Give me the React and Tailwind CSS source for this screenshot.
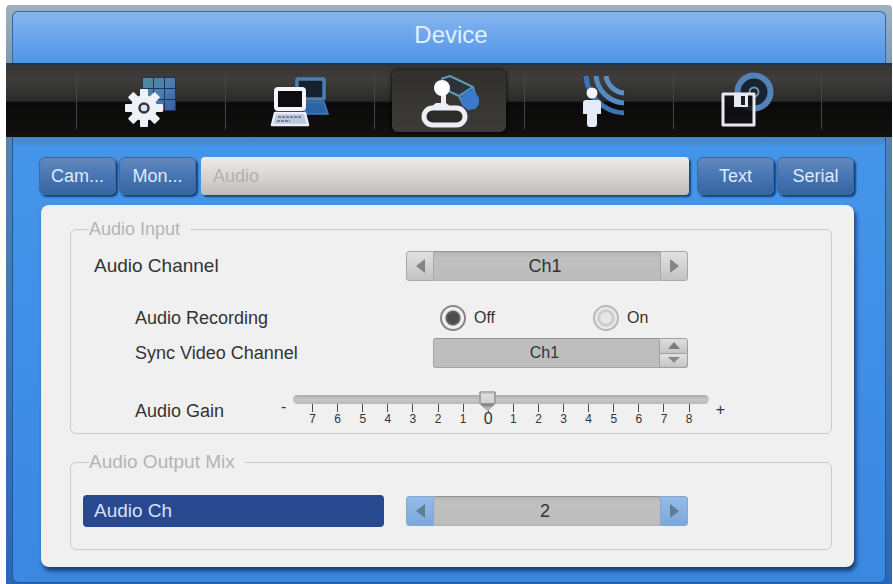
import { useState } from 'react';

function GearIcon() {
  const cells = [0, 1, 2];
  return (
    <svg width="60" height="60" viewBox="0 0 60 60" aria-hidden="true">
      <defs>
        <linearGradient id="grid" x1="21" y1="6" x2="55" y2="40" gradientUnits="userSpaceOnUse">
          <stop offset="0" stopColor="#4f8c98" />
          <stop offset="0.5" stopColor="#4b7fb0" />
          <stop offset="1" stopColor="#3558a8" />
        </linearGradient>
      </defs>
      <rect x="21" y="6" width="34" height="34" fill="#1d3558" />
      {cells.map((r) =>
        cells.map((c) => (
          <rect key={`${r}${c}`} x={22 + c * 11} y={7 + r * 11} width="10" height="10" fill="url(#grid)" />
        ))
      )}
      <g fill="#eef1f8">
        {[0, 45, 90, 135].map((a) => (
          <rect key={a} x="19" y="18" width="8" height="38" rx="1" transform={`rotate(${a} 23 37)`} />
        ))}
        <circle cx="23" cy="37" r="13" />
      </g>
      <circle cx="23" cy="37" r="4.5" fill="#dfe5ee" stroke="#33383f" strokeWidth="2.5" />
    </svg>
  );
}

function ComputersIcon() {
  return (
    <svg width="60" height="60" viewBox="0 0 60 60" aria-hidden="true">
      <rect x="27" y="8" width="27" height="20" rx="1" fill="#15212e" stroke="#4d7fae" strokeWidth="3.5" />
      <path d="M32 31h22l4 12H36z" fill="#2c64a8" stroke="#3f7cc0" strokeWidth="1.5" />
      <rect x="6" y="18" width="28" height="20" rx="2" fill="#0d0d0f" stroke="#f3f5fb" strokeWidth="4" />
      <path d="M5 42h30l3 12H2z" fill="#bcc8de" stroke="#e9eefa" strokeWidth="2.5" strokeLinejoin="round" />
      <path d="M8 46h24M7 50h13" stroke="#5f6c82" strokeWidth="1.5" strokeDasharray="3 1" />
    </svg>
  );
}

function JoystickIcon() {
  return (
    <svg width="60" height="60" viewBox="0 0 60 60" aria-hidden="true">
      <path d="M22 8l9-3 23 11-14 9-15-7" fill="#2c3438" stroke="#5a9ab8" strokeWidth="2" strokeLinejoin="round" />
      <path d="M40 25l14-9 3 10-12 9z" fill="#34648f" stroke="#5590c4" strokeWidth="2" strokeLinejoin="round" />
      <path d="M45 24l9-4 7 10-5 7-7 1-6-6z" fill="#3a79cb" stroke="#3a79cb" strokeWidth="2" strokeLinejoin="round" />
      <path d="M22 20h5v17h-5z" fill="#eceef4" />
      <circle cx="23" cy="17" r="8" fill="#fff" />
      <rect x="5" y="37" width="41" height="17" rx="8.5" fill="#2b2b29" stroke="#eceef6" strokeWidth="5" />
      <path d="M12 36l5-4h10l5 4" fill="#eceef6" />
    </svg>
  );
}

function SensorIcon() {
  return (
    <svg width="60" height="60" viewBox="0 0 60 60" aria-hidden="true">
      <g fill="none" strokeWidth="5">
        <path d="M37 5A20 20 0 0 0 55 22" stroke="#5b8fc4" />
        <path d="M27 5A30 30 0 0 0 55 32" stroke="#548ac0" />
        <path d="M17 5A40 40 0 0 0 55 42" stroke="#3f72b4" />
      </g>
      <circle cx="23" cy="22" r="5.5" fill="#f2f4fb" />
      <path
        d="M17 29h12a3 3 0 0 1 3 3v11h-4v10a3 3 0 0 1-3 3h-4a3 3 0 0 1-3-3V43h-4V32a3 3 0 0 1 3-3z"
        fill="#e4eaf8"
      />
    </svg>
  );
}

function StorageIcon() {
  return (
    <svg width="60" height="60" viewBox="0 0 60 60" aria-hidden="true">
      <circle cx="37" cy="21" r="16.5" fill="#182231" stroke="#5481b8" strokeWidth="6" />
      <circle cx="37" cy="21" r="4.5" fill="none" stroke="#7396a4" strokeWidth="2" />
      <path d="M6 23h31v31H6z" fill="#111114" fillOpacity="0.85" stroke="#e8eaf2" strokeWidth="3" strokeLinejoin="round" />
      <path d="M17 23h14v13H17z" fill="#e8eaf2" />
      <rect x="24" y="25" width="4" height="9" fill="#1b2027" />
    </svg>
  );
}

const sections = [
  { name: 'System', Icon: GearIcon },
  { name: 'Network', Icon: ComputersIcon },
  { name: 'Device', Icon: JoystickIcon },
  { name: 'Event', Icon: SensorIcon },
  { name: 'Storage', Icon: StorageIcon },
];

function Tab({ children }) {
  return (
    <button
      type="button"
      className="h-[38px] w-[77px] shrink-0 rounded-md border border-[#3a6aa6] bg-linear-to-b from-[#6388b9] via-[#4a77b5] via-45% to-[#35659f] text-lg leading-none text-[#dfeafa] shadow-[2px_2px_2px_#173f73]"
    >
      {children}
    </button>
  );
}

function Stepper({ label, value, onChange, active }) {
  const button = active
    ? 'border-[#8aa6cc] bg-linear-to-b from-[#96bbe8] to-[#7ba8dc]'
    : 'border-[#a8a8a8] bg-linear-to-b from-[#e2e2e2] to-[#c2c2c2]';
  const arrow = active ? '#5d7f90' : '#858585';
  return (
    <div role="group" aria-label={label} className="flex h-[30px] min-w-0">
      <button
        type="button"
        aria-label={`${label} previous`}
        onClick={() => onChange(-1)}
        className={`flex w-7 items-center justify-center rounded-l-[3px] border ${button}`}
      >
        <svg width="9" height="14" viewBox="0 0 9 14"><path d="M9 0v14L0 7z" fill={arrow} /></svg>
      </button>
      <output className="flex flex-1 items-center justify-center border-y border-t-[#929292] border-b-[#b4b4b4] bg-linear-to-b from-[#b4b4b4] via-[#c0c0c0] via-20% to-[#bcbcbc] pr-1 text-lg leading-none text-[#333]">
        {value}
      </output>
      <button
        type="button"
        aria-label={`${label} next`}
        onClick={() => onChange(1)}
        className={`flex w-7 items-center justify-center rounded-r-[3px] border ${button}`}
      >
        <svg width="9" height="14" viewBox="0 0 9 14"><path d="M0 0v14l9-7z" fill={arrow} /></svg>
      </button>
    </div>
  );
}

function Radio({ label, checked, onChange }) {
  return (
    <label className="flex w-[153px] shrink-0 items-center gap-2 text-base leading-none text-[#333]">
      <input
        type="radio"
        name="recording"
        checked={checked}
        onChange={onChange}
        className="size-[26px] appearance-none rounded-full border-2 border-[#b8b8b8] bg-[radial-gradient(circle,#e6e6e6_0_5px,#c6c6c6_7px,#d2d2d2_8px,#ececec_10px)] checked:border-[#858585] checked:bg-[radial-gradient(circle,#4c4c4c_0_5px,#6a6a6a_7px,#e8e8e8_8px,#f2f2f2_10px)]"
      />
      {label}
    </label>
  );
}

const marks = [-7, -6, -5, -4, -3, -2, -1, 0, 1, 2, 3, 4, 5, 6, 7, 8];
const row = 'grid grid-cols-[minmax(0,301fr)_minmax(0,282fr)] gap-[22px] pr-[143px] items-center';
const fieldset = 'min-w-0 rounded-md border border-[#cccccc] pl-3';
const legend = 'ml-[6px] h-6 pr-[10px] leading-6 text-[#b4b4b4]';

export default function App() {
  const [channel, setChannel] = useState(1);
  const [sync, setSync] = useState(1);
  const [mix, setMix] = useState(2);
  const [recording, setRecording] = useState(false);
  const [gain, setGain] = useState(0);
  const step = (set) => (d) => set((v) => Math.min(16, Math.max(1, v + d)));

  return (
    <div className="min-h-screen bg-white pt-[5px] pr-px pl-[6px] font-['Liberation_Sans',Arial,sans-serif]">
      <div className="rounded-t-sm bg-linear-to-b from-[#9fb1bd] via-[#5583ae] via-20% to-[#2a67b5] pt-[6px] pb-[2px]">
        <header className="mx-[6px] flex h-[52px] items-center justify-center rounded-t-md border border-b-0 border-[#34689f] bg-linear-to-b from-[#86b5ee] to-[#4e94e8] pb-[6px]">
          <h1 className="pl-1 text-2xl leading-none text-[#e3f0fd]">Device</h1>
        </header>

        <nav
          aria-label="Sections"
          className="border-t-2 border-[#1d3450] bg-[linear-gradient(#373634_0%,#3e3d3b_20%,#2a2a2a_50%,#0a0a0a_52%,#131110_100%)] px-[70px]"
        >
          <ul className="grid h-[72px] grid-cols-5 items-center">
            {sections.map(({ name, Icon }) => (
              <li
                key={name}
                className="flex h-14 items-center justify-center border-l border-[#454545] last:border-r"
              >
                <button
                  type="button"
                  aria-label={name}
                  aria-current={name === 'Device' ? 'page' : undefined}
                  className="flex h-[62px] w-[114px] items-center justify-center rounded-md aria-[current]:bg-linear-to-b aria-[current]:from-[#31302d] aria-[current]:to-[#3c3b37] aria-[current]:shadow-[0_0_4px_#000]"
                >
                  <Icon />
                </button>
              </li>
            ))}
          </ul>
        </nav>

        <main className="mx-[6px] rounded-b-md border border-t-0 border-[#1f5aa0] bg-[linear-gradient(#4a83bd_0px,#4494ea_10px,#4494ea_40px,#3a88e0_100%)] pt-5 pr-[31px] pb-[15px] pl-[26px]">
          <div className="flex gap-[3px]">
            <Tab>Cam...</Tab>
            <Tab>Mon...</Tab>
            <button
              type="button"
              aria-pressed="true"
              className="mr-[5px] ml-[2px] h-[38px] min-w-0 flex-1 rounded-[4px] bg-linear-to-b from-[#efebe9] via-[#d9d5d3] to-[#bdbbb8] pl-3 text-left text-lg leading-none text-[#b3b1b0] shadow-[2px_2px_2px_#1d4272]"
            >
              Audio
            </button>
            <Tab>Text</Tab>
            <Tab>Serial</Tab>
          </div>

          <div className="mt-[10px] ml-[2px] rounded-lg bg-[#f0f0f0] pt-3 pr-[22px] pb-[17px] pl-[29px] text-[#333] shadow-[2px_4px_4px_#173e70]">
            <fieldset className={fieldset}>
              <legend className={`${legend} text-lg`}>Audio Input</legend>
              <div className={`${row} pt-[10px]`}>
                <span className="pl-[11px] text-[19px] leading-[30px]">Audio Channel</span>
                <Stepper label="Audio Channel" value={`Ch${channel}`} onChange={step(setChannel)} />
              </div>

              <div className={`${row} mt-6`} role="radiogroup" aria-labelledby="recording">
                <span id="recording" className="pl-[52px] text-lg leading-[26px]">Audio Recording</span>
                <div className="flex pl-[34px]">
                  <Radio label="Off" checked={!recording} onChange={() => setRecording(false)} />
                  <Radio label="On" checked={recording} onChange={() => setRecording(true)} />
                </div>
              </div>

              <div className={`${row} mt-[7px]`}>
                <span className="pl-[52px] text-lg leading-[30px]">Sync Video Channel</span>
                <div role="group" aria-label="Sync Video Channel" className="ml-[27px] flex h-[30px]">
                  <output className="flex flex-1 items-center justify-center rounded-l-[3px] border border-t-[#929292] border-r-0 border-b-[#a4a4a4] border-l-[#a4a4a4] bg-[#bebebe] pr-1 text-base leading-none">
                    Ch{sync}
                  </output>
                  <div className="flex w-[29px] flex-col">
                    <button
                      type="button"
                      aria-label="Next channel"
                      onClick={() => step(setSync)(1)}
                      className="flex flex-1 items-center justify-center rounded-tr-[3px] border border-[#a0a0a0] bg-linear-to-b from-[#dedede] to-[#c4c4c4]"
                    >
                      <svg width="12" height="7" viewBox="0 0 12 7"><path d="M0 7l6-7 6 7z" fill="#7c7c7c" /></svg>
                    </button>
                    <button
                      type="button"
                      aria-label="Previous channel"
                      onClick={() => step(setSync)(-1)}
                      className="flex flex-1 items-center justify-center rounded-br-[3px] border border-t-0 border-[#a0a0a0] bg-linear-to-b from-[#e2e2e2] to-[#c4c4c4]"
                    >
                      <svg width="12" height="6" viewBox="0 0 12 6"><path d="M0 0l6 6 6-6z" fill="#8a8a8a" /></svg>
                    </button>
                  </div>
                </div>
              </div>

              <div className="mt-5 mb-[7px] flex items-end pr-[106px]">
                <label htmlFor="gain" className="w-[198px] pl-[52px] text-lg leading-[30px]">Audio Gain</label>
                <span className="w-3 text-base leading-[38px]">-</span>
                <div className="min-w-0 flex-1">
                  <input
                    id="gain"
                    type="range"
                    min="-7"
                    max="8"
                    value={gain}
                    onChange={(e) => setGain(Number(e.target.value))}
                    className="relative z-10 block h-[22px] w-full appearance-none bg-transparent [&::-webkit-slider-runnable-track]:h-[9px] [&::-webkit-slider-runnable-track]:rounded-full [&::-webkit-slider-runnable-track]:bg-linear-to-b [&::-webkit-slider-runnable-track]:from-[#acacac] [&::-webkit-slider-runnable-track]:via-[#c6c6c6] [&::-webkit-slider-runnable-track]:to-[#bababa] [&::-webkit-slider-thumb]:-mt-1 [&::-webkit-slider-thumb]:h-[21px] [&::-webkit-slider-thumb]:w-[17px] [&::-webkit-slider-thumb]:appearance-none [&::-webkit-slider-thumb]:bg-[linear-gradient(90deg,#a0a0a0_2px,transparent_2px_15px,#a0a0a0_15px),linear-gradient(#b0b0b0_0_2px,#dedede_3px,#d2d2d2_55%,#8a8a8a_60%,#8a8a8a_70%,#b5b5b5_80%)] [&::-webkit-slider-thumb]:[clip-path:polygon(12%_0,88%_0,100%_12%,100%_60%,50%_100%,0_60%,0_12%)]"
                  />
                  <div className="-mt-[6px] grid grid-cols-16 px-[7px]">
                    {marks.map((m) => (
                      <div key={m} className="flex flex-col items-center">
                        <span className="h-2 w-px bg-[#4a4a4a]" />
                        <span className={m === 0 ? 'text-base leading-[14px]' : 'text-xs leading-[14px]'}>
                          {Math.abs(m)}
                        </span>
                      </div>
                    ))}
                  </div>
                </div>
                <span className="pl-[7px] text-base leading-8">+</span>
              </div>
            </fieldset>

            <fieldset className={`${fieldset} mt-4`}>
              <legend className={`${legend} text-[19px]`}>Audio Output Mix</legend>
              <div className={`${row} pt-[21px] pb-[22px]`}>
                <span className="rounded-[4px] bg-[#28488f] pl-[11px] text-[19px] leading-8 text-[#d6e2f4]">Audio Ch</span>
                <Stepper active label="Audio Ch" value={mix} onChange={step(setMix)} />
              </div>
            </fieldset>
          </div>
        </main>
      </div>
    </div>
  );
}
